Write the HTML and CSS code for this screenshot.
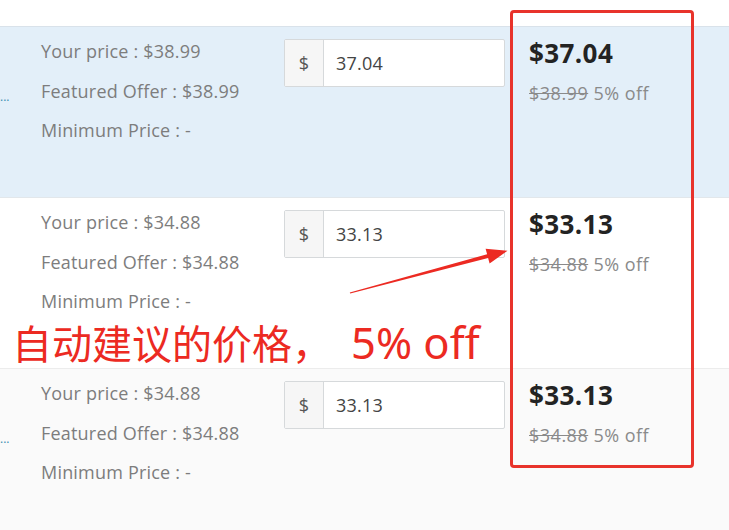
FILE: index.html
```html
<!DOCTYPE html>
<html lang="en">
<head>
<meta charset="utf-8">
<title>Pricing</title>
<link rel="stylesheet" href="styles.css">
</head>
<body>
<div class="page">
  <div class="top-strip"></div>
  <div class="row row-active">
    <div class="title-cell"><span class="dots">...</span></div>
    <div class="info">
      <div>Your price : $38.99</div>
      <div>Featured Offer : $38.99</div>
      <div>Minimum Price : -</div>
    </div>
    <div class="input-cell">
      <div class="input-group"><span class="addon">$</span><span class="field">37.04</span></div>
    </div>
    <div class="price-cell">
      <div class="price">$37.04</div>
      <div class="was"><s>$38.99</s> 5% off</div>
    </div>
  </div>
  <div class="row">
    <div class="title-cell"></div>
    <div class="info">
      <div>Your price : $34.88</div>
      <div>Featured Offer : $34.88</div>
      <div>Minimum Price : -</div>
    </div>
    <div class="input-cell">
      <div class="input-group"><span class="addon">$</span><span class="field">33.13</span></div>
    </div>
    <div class="price-cell">
      <div class="price">$33.13</div>
      <div class="was"><s>$34.88</s> 5% off</div>
    </div>
  </div>
  <div class="row row-muted">
    <div class="title-cell"><span class="dots">...</span></div>
    <div class="info">
      <div>Your price : $34.88</div>
      <div>Featured Offer : $34.88</div>
      <div>Minimum Price : -</div>
    </div>
    <div class="input-cell">
      <div class="input-group"><span class="addon">$</span><span class="field">33.13</span></div>
    </div>
    <div class="price-cell">
      <div class="price">$33.13</div>
      <div class="was"><s>$34.88</s> 5% off</div>
    </div>
  </div>

  <div class="highlight-box"></div>
  <svg class="arrow" width="729" height="530" viewBox="0 0 729 530">
    <polygon points="350.2,293.6 488.1,258.0 489.6,263.4 507.5,250.8 485.6,248.8 487.1,254.2 349.8,292.4" fill="#ec2a22"/>
  </svg>
  <div class="note">自动建议的价格，<span class="note-latin">5% off</span></div>
</div>
</body>
</html>
```
FILE: styles.css
```css
html, body {
  margin: 0;
  padding: 0;
  background: #ffffff;
}
.page {
  position: relative;
  width: 729px;
  height: 530px;
  overflow: hidden;
  font-family: "Open Sans", "Noto Sans", sans-serif;
  font-size: 18px;
  letter-spacing: 0.2px;
}
.top-strip {
  height: 26px;
}
.row {
  display: grid;
  grid-template-columns: 41px 243px 221px 1fr;
  height: 171px;
  box-sizing: border-box;
  border-top: 1px solid #e2e7eb;
  background: #ffffff;
}
.row-active {
  background: #e3eff9;
  border-top-color: #d9e2ea;
}
.row-muted {
  background: #fafafa;
  border-top-color: #ececec;
  height: 200px;
}
.title-cell {
  overflow: hidden;
}
.dots {
  display: block;
  padding-top: 60px;
  color: #3c8db0;
  font-size: 12px;
  line-height: 20px;
  letter-spacing: 0;
}
.info {
  padding-top: 5px;
  line-height: 39.5px;
  color: #7d7d7d;
}
.input-cell {
  padding-top: 12px;
}
.input-group {
  display: flex;
  height: 48px;
  box-sizing: border-box;
  border: 1px solid #d6d9db;
  border-radius: 2px;
  background: #ffffff;
}
.addon {
  width: 38px;
  flex: none;
  display: flex;
  align-items: center;
  justify-content: center;
  background: #f6f6f6;
  border-right: 1px solid #d6d9db;
  color: #555555;
}
.field {
  display: flex;
  align-items: center;
  padding-left: 12px;
  color: #444444;
}
.price-cell {
  padding-left: 24px;
  padding-top: 7px;
}
.price {
  font-size: 26px;
  font-weight: 700;
  color: #232323;
  line-height: 38px;
  letter-spacing: 0.4px;
}
.was {
  margin-top: 1px;
  line-height: 40px;
  color: #8a8a8a;
  letter-spacing: 0.5px;
}
.was s {
  text-decoration-thickness: 1px;
}
.highlight-box {
  position: absolute;
  left: 510px;
  top: 10px;
  width: 184px;
  height: 458px;
  box-sizing: border-box;
  border: 3px solid #e8332b;
  border-radius: 4px;
}
.arrow {
  position: absolute;
  left: 0;
  top: 0;
  pointer-events: none;
}
.note {
  position: absolute;
  left: 12px;
  top: 319px;
  font-family: "Noto Sans CJK SC", "Noto Sans", sans-serif;
  font-size: 40px;
  line-height: 46px;
  color: #ec2a22;
  white-space: nowrap;
  letter-spacing: 0;
}
.note-latin {
  font-family: "Noto Sans", sans-serif;
  font-size: 43.5px;
  margin-left: 19px;
}
```
